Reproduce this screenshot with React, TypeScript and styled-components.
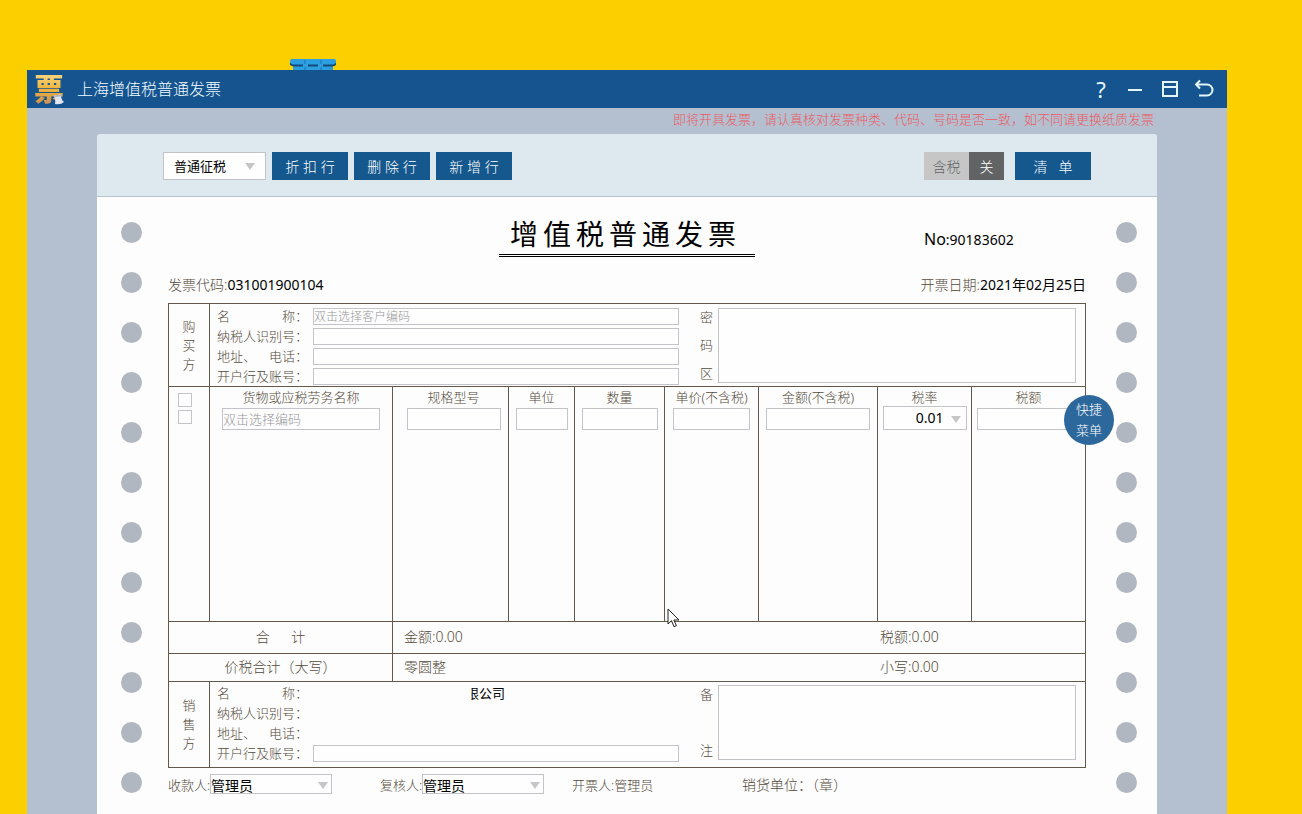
import React from "react";
import styled, { createGlobalStyle } from "styled-components";

const ink = "#544a3a";
const line = "#62594c";
const fieldLine = "#c3c3c9";
const blue = "#15588e";

const GlobalStyle = createGlobalStyle`
  * { box-sizing: border-box; }
  body {
    margin: 0;
    background: #fccf00;
    color: ${ink};
    font-family: "Noto Sans", "Noto Sans CJK SC", sans-serif;
    font-size: 13px;
    font-weight: 300;
    line-height: 20px;
  }
  button, input, select, textarea { font: inherit; color: #000; border-radius: 0; }
`;

const Desktop = styled.div`
  min-height: 100vh;
  padding: 70px 75px 0 27px;
  display: flex;
  flex-direction: column;
  overflow: hidden;
`;

const Window = styled.div`
  position: relative;
  flex: 1;
  min-width: 1120px;
  display: flex;
  flex-direction: column;
  background: #b4c0cf;
`;

const BackgroundIcon = styled.svg`
  position: absolute;
  left: 263px;
  top: -11px;
`;

const TitleBar = styled.header`
  height: 38px;
  padding: 0 13px 0 7px;
  display: flex;
  align-items: center;
  background: #15548f;
  color: #f0fbff;
`;

const Logo = styled.span`
  position: relative;
  width: 30px;
  height: 34px;
  margin-right: 13px;
  font-size: 30px;
  line-height: 34px;
  font-weight: 900;
  background: linear-gradient(#f5d27a 10%, #eeb53c 50%, #cf9350 90%);
  background-clip: text;
  -webkit-background-clip: text;
  color: transparent;
`;

const LogoCurl = styled.svg`
  position: absolute;
  right: 0;
  bottom: 1px;
`;

const WindowTitle = styled.h1`
  margin: 0;
  flex: 1;
  font-size: 16px;
  font-weight: 300;
  line-height: 24px;
`;

const WindowButtons = styled.div`
  display: flex;
  gap: 12px;
`;

const WindowButton = styled.button`
  width: 22px;
  height: 24px;
  padding: 0;
  border: 0;
  background: none;
  color: #e4f6fb;
  font-size: 22px;
  font-weight: 400;
  line-height: 24px;
  display: flex;
  align-items: center;
  justify-content: center;
`;

const Notice = styled.p`
  margin: 0;
  padding: 1px 73px 5px;
  color: #ea5a64;
  text-align: right;
`;

const Paper = styled.main`
  flex: 1;
  margin: 0 70px;
  display: flex;
  flex-direction: column;
  border-radius: 4px 4px 0 0;
  background: #fdfdfd;
`;

const Toolbar = styled.div`
  height: 63px;
  padding: 1px 66px 0;
  display: flex;
  align-items: center;
  gap: 6px;
  border-bottom: 1px solid #b5c3cf;
  border-radius: 4px 4px 0 0;
  background: #dee8ef;
`;

const ToolButton = styled.button`
  width: 76px;
  height: 28px;
  padding: 2px 0 0;
  border: 0;
  background: ${blue};
  color: #fff;
  font-size: 14px;
  white-space: pre;
`;

const TaxSwitch = styled.button`
  height: 28px;
  margin: 0 5px 0 auto;
  padding: 0;
  border: 0;
  display: flex;
  font-size: 14px;
  line-height: 30px;
`;

const SwitchLabel = styled.span`
  width: 45px;
  height: 28px;
  background: #c6c6c6;
  color: #626466;
`;

const SwitchState = styled.span`
  width: 35px;
  height: 28px;
  background: #626364;
  color: #fff;
`;

const PickerBox = styled.span<{ $width: number; $height: number }>`
  display: grid;
  grid-template-rows: 100%;
  width: ${(p) => p.$width}px;
  height: ${(p) => p.$height}px;
  > * { grid-area: 1 / 1; }
`;

const PickerSelect = styled.select<{ $inset: number; $size: number; $end?: boolean }>`
  appearance: none;
  width: 100%;
  height: 100%;
  min-height: 0;
  padding: 0 ${(p) => (p.$end ? 22 : 0)}px 0 ${(p) => p.$inset}px;
  border: 1px solid ${fieldLine};
  background: #fefefe;
  font-size: ${(p) => p.$size}px;
  font-weight: 400;
  text-align-last: ${(p) => (p.$end ? "right" : "left")};
`;

const PickerArrow = styled.svg<{ $gap: number }>`
  place-self: center end;
  margin-right: ${(p) => p.$gap}px;
  margin-top: 2px;
  pointer-events: none;
`;

const Body = styled.div`
  flex: 1;
  display: grid;
  grid-template-columns: 71px minmax(0, 1fr) 71px;
`;

const Holes = styled.div<{ $inset: number }>`
  padding: 25px 0 20px ${(p) => p.$inset}px;
  display: flex;
  flex-direction: column;
  gap: 29px;
`;

const Hole = styled.span`
  width: 21px;
  height: 21px;
  border-radius: 50%;
  background: #b1b7c1;
`;

const Invoice = styled.section`
  padding-top: 19px;
`;

const Heading = styled.div`
  display: grid;
  grid-template-columns: 1fr 256px 1fr;
  align-items: end;
`;

const InvoiceTitle = styled.h2`
  grid-column: 2;
  margin: 0;
  padding: 0 0 2px 11px;
  border-bottom: 3px double #000;
  color: #000;
  font-size: 28px;
  font-weight: 400;
  line-height: 36px;
  letter-spacing: 5px;
  white-space: nowrap;
`;

const InvoiceNumber = styled.div`
  justify-self: end;
  width: 162px;
  padding-bottom: 7px;
  color: #000;
  font-size: 14px;
  font-weight: 400;
`;

const NumberMark = styled.span`
  font-size: 16px;
`;

const Meta = styled.div`
  margin: 18px 0 8px;
  display: flex;
  justify-content: space-between;
  font-size: 14px;
  white-space: nowrap;
`;

const Value = styled.span`
  color: #000;
  font-weight: 400;
`;

const Form = styled.form`
  border: 1px solid ${line};
`;

const Party = styled.section<{ $height: number; $top: number }>`
  height: ${(p) => p.$height}px;
  padding-right: 9px;
  display: grid;
  grid-template-columns: 41px minmax(0, 469fr) 39px minmax(0, 358fr);
  --top: ${(p) => p.$top}px;
`;

const PartyName = styled.div`
  border-right: 1px solid ${line};
  display: flex;
  flex-direction: column;
  align-items: center;
  justify-content: center;
  line-height: 19px;
`;

const Fields = styled.div`
  padding: var(--top) 0 0 7px;
  display: flex;
  flex-direction: column;
  gap: 3px;
`;

const FieldRow = styled.div`
  height: 17px;
  display: grid;
  grid-template-columns: 91px minmax(0, 1fr);
  column-gap: 5px;
  line-height: 16px;
`;

const FieldLabel = styled.label`
  display: flex;
  justify-content: space-between;
  white-space: nowrap;
`;

const TextInput = styled.input`
  width: 100%;
  height: 17px;
  padding: 0 0 1px;
  border: 1px solid ${fieldLine};
  background: #fefefe;
  font-size: 12px;
  &::placeholder { color: #96969a; opacity: 1; }
`;

const SellerName = styled.output`
  position: relative;
  margin-left: 153px;
  color: #000;
  font-weight: 400;
  white-space: nowrap;
  &::before {
    content: "";
    position: absolute;
    left: 0;
    top: 0;
    width: 5px;
    height: 17px;
    background: #fdfdfd;
  }
`;

const SideLabel = styled.label`
  height: 75px;
  margin-top: var(--top);
  padding-left: 21px;
  display: flex;
  flex-direction: column;
  justify-content: space-between;
  line-height: 19px;
`;

const NoteBox = styled.textarea`
  width: 100%;
  height: 75px;
  margin-top: var(--top);
  border: 1px solid ${fieldLine};
  background: #fefefe;
  resize: none;
`;

const Items = styled.div`
  position: relative;
`;

const ItemTable = styled.table`
  width: 100%;
  table-layout: fixed;
  border-collapse: separate;
  border-spacing: 0;
  border-bottom: 1px solid ${line};
  border-top: 1px solid ${line};
`;

const HeadCell = styled.th<{ $pad?: number }>`
  height: 20px;
  padding: 0 0 0 ${(p) => p.$pad ?? 0}px;
  font-weight: 300;
  white-space: nowrap;
  vertical-align: bottom;
  & + & { border-left: 1px solid ${line}; }
`;

const ItemCell = styled.td<{ $pad?: number }>`
  height: 214px;
  padding: 1px 0 0 ${(p) => p.$pad ?? 0}px;
  vertical-align: top;
  text-align: center;
  & + & { border-left: 1px solid ${line}; }
`;

const CellInput = styled.input<{ $width: number }>`
  display: block;
  width: ${(p) => p.$width}px;
  height: 22px;
  margin: 0 auto;
  padding: 0;
  border: 1px solid ${fieldLine};
  background: #fefefe;
  &::placeholder { color: #96969a; opacity: 1; }
`;

const RateSlot = styled.div`
  display: flex;
  justify-content: center;
  height: 24px;
  margin-top: -2px;
`;

const Tick = styled.input`
  appearance: none;
  display: block;
  width: 14px;
  height: 14px;
  margin: 0 0 0 9px;
  border: 1px solid ${fieldLine};
  background: #fefefe;
  td & { margin-top: 2px; }
`;

const SumHead = styled.th<{ $height: number }>`
  height: ${(p) => p.$height}px;
  padding: 0 0 2px;
  border-top: 1px solid ${line};
  font-size: 14px;
  font-weight: 300;
  white-space: pre;
`;

const SumCell = styled.td<{ $inset: number }>`
  padding: 0 0 2px ${(p) => p.$inset}px;
  border-top: 1px solid ${line};
  font-size: 14px;
  th + & { border-left: 1px solid ${line}; }
`;

const QuickMenu = styled.button`
  position: absolute;
  top: 9px;
  right: -29px;
  width: 50px;
  height: 50px;
  padding: 0 11px 1px;
  border: 0;
  border-radius: 50%;
  background: #2d689d;
  color: #fff;
  line-height: 21px;
`;

const Pointer = styled.svg`
  position: absolute;
  left: 498px;
  top: 222px;
`;

const Signatures = styled.footer`
  margin-top: 6px;
  padding-bottom: 20px;
  display: flex;
  align-items: center;
  white-space: nowrap;
  line-height: 22px;
`;

const Signer = styled.label<{ $before?: number }>`
  margin-left: ${(p) => p.$before ?? 0}px;
  display: grid;
  grid-template-columns: 42px 122px;
`;

const Issuer = styled.span`
  margin-left: 28px;
  width: 170px;
`;

const Seal = styled.span`
  font-size: 14px;
`;

type PickerProps = {
  label?: string;
  value: string;
  width: number;
  height: number;
  inset?: number;
  size?: number;
  end?: boolean;
  gap?: number;
};

function Picker({ label, value, width, height, inset = 0, size = 14, end, gap = 4 }: PickerProps) {
  return (
    <PickerBox $width={width} $height={height}>
      <PickerSelect aria-label={label} defaultValue={value} $inset={inset} $size={size} $end={end}>
        <option>{value}</option>
      </PickerSelect>
      <PickerArrow $gap={gap} width="10" height="7" viewBox="0 0 10 7" aria-hidden>
        <path d="M0 0h10L5 7z" fill="#c6c6c8" />
      </PickerArrow>
    </PickerBox>
  );
}

const fieldLabels = [["名", "称："], ["纳税人识别号："], ["地址、", "电话："], ["开户行及账号："]];

type Column = { name: string; input: number; col?: number; pad?: number; hint?: string };

const columns: Column[] = [
  { name: "货物或应税劳务名称", col: 183, input: 158, hint: "双击选择编码" },
  { name: "规格型号", col: 116, input: 94, pad: 6 },
  { name: "单位", col: 66, input: 52 },
  { name: "数量", col: 90, input: 76 },
  { name: "单价(不含税)", col: 94, input: 77 },
  { name: "金额(不含税)", col: 119, input: 104 },
  { name: "税率", col: 94, input: 84 },
  { name: "税额", input: 104 },
];

function HoleStrip({ inset }: { inset: number }) {
  return (
    <Holes $inset={inset} aria-hidden>
      {Array.from({ length: 12 }, (_, i) => (
        <Hole key={i} />
      ))}
    </Holes>
  );
}

function PartyBlock({ seller }: { seller?: boolean }) {
  const key = seller ? "seller" : "buyer";
  const name = seller ? "销售方" : "购买方";
  const side = seller ? "备注" : "密码区";
  return (
    <Party $height={seller ? 85 : 82} $top={seller ? 3 : 4}>
      <PartyName>
        {[...name].map((c) => (
          <span key={c}>{c}</span>
        ))}
      </PartyName>
      <Fields>
        {fieldLabels.map((parts, i) => {
          const id = `${key}-${i}`;
          return (
            <FieldRow key={id}>
              <FieldLabel htmlFor={id}>
                {parts.map((p) => (
                  <span key={p}>{p}</span>
                ))}
              </FieldLabel>
              {!seller && <TextInput id={id} placeholder={i === 0 ? "双击选择客户编码" : undefined} />}
              {seller && i === 0 && <SellerName id={id}>限公司</SellerName>}
              {seller && (i === 1 || i === 2) && <output id={id} />}
              {seller && i === 3 && <TextInput id={id} />}
            </FieldRow>
          );
        })}
      </Fields>
      <SideLabel htmlFor={`${key}-note`}>
        {[...side].map((c) => (
          <span key={c}>{c}</span>
        ))}
      </SideLabel>
      <NoteBox id={`${key}-note`} />
    </Party>
  );
}

export default function App() {
  return (
    <Desktop>
      <GlobalStyle />
      <Window>
        <BackgroundIcon width="46" height="11" viewBox="0 0 46 11" aria-hidden>
          <path d="M2 0h42q2 0 2 2v3l-3 2v4H3V7L0 5V2q0-2 2-2z" fill="#2b9fe0" />
          <path d="M0 4.500q1 2 4 2h9M18 6.500h10M33 6.500h9q3 0 4-2" fill="none" stroke="#144a78" strokeWidth="1.800" />
          <path d="M15 1v4M31 1v4M15 8v3M31 8v3" stroke="#2388cc" strokeWidth="2" />
        </BackgroundIcon>
        <TitleBar>
          <Logo>
            票
            <LogoCurl width="11" height="12" viewBox="0 0 11 12" aria-hidden>
              <path d="M1 2q2 1 7-1 0 6 3 8-3 3-9 2 1-4-1-9z" fill="#dfe3f2" />
              <path d="M1 2q2 1 7-1l0 2q-3 1-6 1z" fill="#a9b4cf" />
            </LogoCurl>
          </Logo>
          <WindowTitle>上海增值税普通发票</WindowTitle>
          <WindowButtons>
            <WindowButton aria-label="帮助">?</WindowButton>
            <WindowButton aria-label="最小化">
              <svg width="22" height="22" viewBox="0 0 22 22" fill="none" stroke="currentColor" strokeWidth="2">
                <path d="M4 12h14" />
              </svg>
            </WindowButton>
            <WindowButton aria-label="最大化">
              <svg width="22" height="22" viewBox="0 0 22 22" fill="none" stroke="currentColor" strokeWidth="2">
                <path d="M5 4h14v14H5zM5 9h14" />
              </svg>
            </WindowButton>
            <WindowButton aria-label="返回">
              <svg width="22" height="22" viewBox="0 0 22 22" fill="none" stroke="currentColor" strokeWidth="2">
                <path d="M8 2.500L4 6.500l4 4M4 6.500h11a5.500 5.500 0 0 1 0 11H7" />
              </svg>
            </WindowButton>
          </WindowButtons>
        </TitleBar>
        <Notice>即将开具发票，请认真核对发票种类、代码、号码是否一致，如不同请更换纸质发票</Notice>
        <Paper>
          <Toolbar>
            <Picker label="征税方式" value="普通征税" width={103} height={28} inset={10} size={13} gap={11} />
            <ToolButton>折 扣 行</ToolButton>
            <ToolButton>删 除 行</ToolButton>
            <ToolButton>新 增 行</ToolButton>
            <TaxSwitch role="switch" aria-checked={false}>
              <SwitchLabel>含税</SwitchLabel>
              <SwitchState>关</SwitchState>
            </TaxSwitch>
            <ToolButton>{"清   单"}</ToolButton>
          </Toolbar>
          <Body>
            <HoleStrip inset={24} />
            <Invoice>
              <Heading>
                <InvoiceTitle>增值税普通发票</InvoiceTitle>
                <InvoiceNumber>
                  <NumberMark>No</NumberMark>:90183602
                </InvoiceNumber>
              </Heading>
              <Meta>
                <span>
                  发票代码:<Value>031001900104</Value>
                </span>
                <span>
                  开票日期:<Value>2021年02月25日</Value>
                </span>
              </Meta>
              <Form>
                <PartyBlock />
                <Items>
                  <ItemTable>
                    <colgroup>
                      <col width={40} />
                      {columns.map((c) => (
                        <col key={c.name} width={c.col} />
                      ))}
                    </colgroup>
                    <thead>
                      <tr>
                        <HeadCell>
                          <Tick type="checkbox" aria-label="全选" />
                        </HeadCell>
                        {columns.map((c) => (
                          <HeadCell key={c.name} scope="col" $pad={c.pad}>
                            {c.name}
                          </HeadCell>
                        ))}
                      </tr>
                    </thead>
                    <tbody>
                      <tr>
                        <ItemCell>
                          <Tick type="checkbox" aria-label="选择第一行" />
                        </ItemCell>
                        {columns.map((c) => (
                          <ItemCell key={c.name} $pad={c.pad}>
                            {c.name === "税率" ? (
                              <RateSlot>
                                <Picker label={c.name} value="0.01" width={c.input} height={24} end gap={6} />
                              </RateSlot>
                            ) : (
                              <CellInput aria-label={c.name} $width={c.input} placeholder={c.hint} />
                            )}
                          </ItemCell>
                        ))}
                      </tr>
                    </tbody>
                    <tfoot>
                      <tr>
                        <SumHead colSpan={2} $height={32}>
                          {"合\u3000  计"}
                        </SumHead>
                        <SumCell colSpan={5} $inset={11}>
                          金额:0.00
                        </SumCell>
                        <SumCell colSpan={2} $inset={3}>
                          税额:0.00
                        </SumCell>
                      </tr>
                      <tr>
                        <SumHead colSpan={2} $height={28}>
                          价税合计（大写）
                        </SumHead>
                        <SumCell colSpan={5} $inset={11}>
                          零圆整
                        </SumCell>
                        <SumCell colSpan={2} $inset={3}>
                          小写:0.00
                        </SumCell>
                      </tr>
                    </tfoot>
                  </ItemTable>
                  <QuickMenu type="button">快捷菜单</QuickMenu>
                  <Pointer width="13" height="20" viewBox="0 0 13 20" aria-hidden>
                    <path
                      d="M1 1v15l3.500-3.300 2.500 6 2.400-1-2.500-5.700H12z"
                      fill="#fff"
                      stroke="#222"
                      strokeWidth="1"
                    />
                  </Pointer>
                </Items>
                <PartyBlock seller />
              </Form>
              <Signatures>
                <Signer>
                  收款人:
                  <Picker value="管理员" width={122} height={20} />
                </Signer>
                <Signer $before={48}>
                  复核人:
                  <Picker value="管理员" width={122} height={20} />
                </Signer>
                <Issuer>开票人:管理员</Issuer>
                <Seal>销货单位：（章）</Seal>
              </Signatures>
            </Invoice>
            <HoleStrip inset={30} />
          </Body>
        </Paper>
      </Window>
    </Desktop>
  );
}
